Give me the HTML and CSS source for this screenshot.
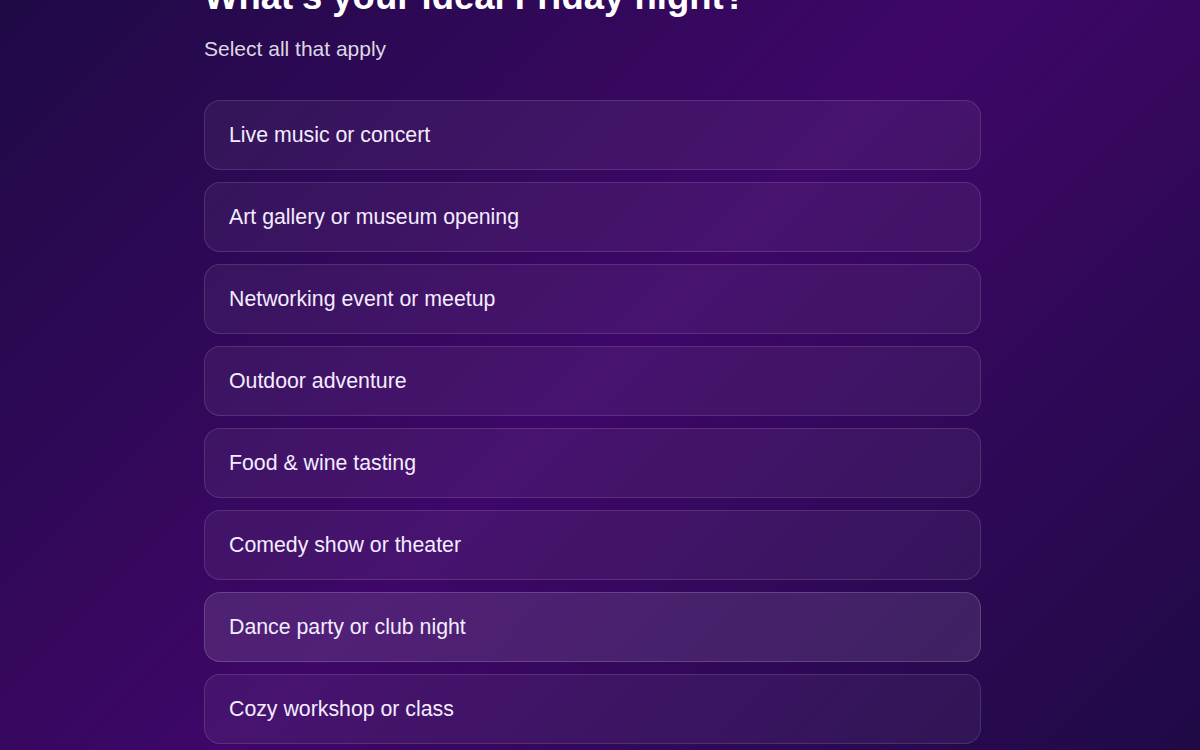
FILE: index.html
```html
<!DOCTYPE html>
<html lang="en">
<head>
    <meta charset="UTF-8">
    <meta name="viewport" content="width=device-width, initial-scale=1.0">
    <title>Friday Night Quiz</title>
    <link rel="stylesheet" href="styles.css">
</head>
<body>
    <div class="quiz">
        <h1 class="question">What's your ideal Friday night?</h1>
        <p class="hint">Select all that apply</p>

        <div class="options">
            <div class="option">Live music or concert</div>
            <div class="option">Art gallery or museum opening</div>
            <div class="option">Networking event or meetup</div>
            <div class="option">Outdoor adventure</div>
            <div class="option">Food &amp; wine tasting</div>
            <div class="option">Comedy show or theater</div>
            <div class="option hover">Dance party or club night</div>
            <div class="option">Cozy workshop or class</div>
        </div>
    </div>
</body>
</html>
```

FILE: styles.css
```css
html, body {
    margin: 0;
    height: 100%;
}
body {
    font-family: "Liberation Sans", Arial, sans-serif;
    color: #f4ecff;
    background: linear-gradient(135deg, #1f0a45 0%, #3e0768 50%, #1f0a45 100%);
    overflow: hidden;
    padding-right: 15px;
    box-sizing: border-box;
}
.quiz {
    max-width: 777px;
    margin: -25px auto 0;
}
.question {
    font-size: 36.5px;
    line-height: 43px;
    font-weight: bold;
    color: #ffffff;
    margin: 0;
}
.hint {
    font-size: 21px;
    color: rgba(255, 255, 255, 0.85);
    margin: 19px 0 0;
}
.options {
    display: flex;
    flex-direction: column;
    gap: 12px;
    margin-top: 39px;
}
.option {
    height: 70px;
    box-sizing: border-box;
    display: flex;
    align-items: center;
    padding: 0 24px;
    font-size: 21.3px;
    background-color: rgba(255, 255, 255, 0.05);
    border: 1px solid rgba(255, 255, 255, 0.12);
    border-radius: 16px;
    cursor: pointer;
}
.option.hover {
    background-color: rgba(255, 255, 255, 0.1);
    border-color: rgba(255, 255, 255, 0.16);
}
```
